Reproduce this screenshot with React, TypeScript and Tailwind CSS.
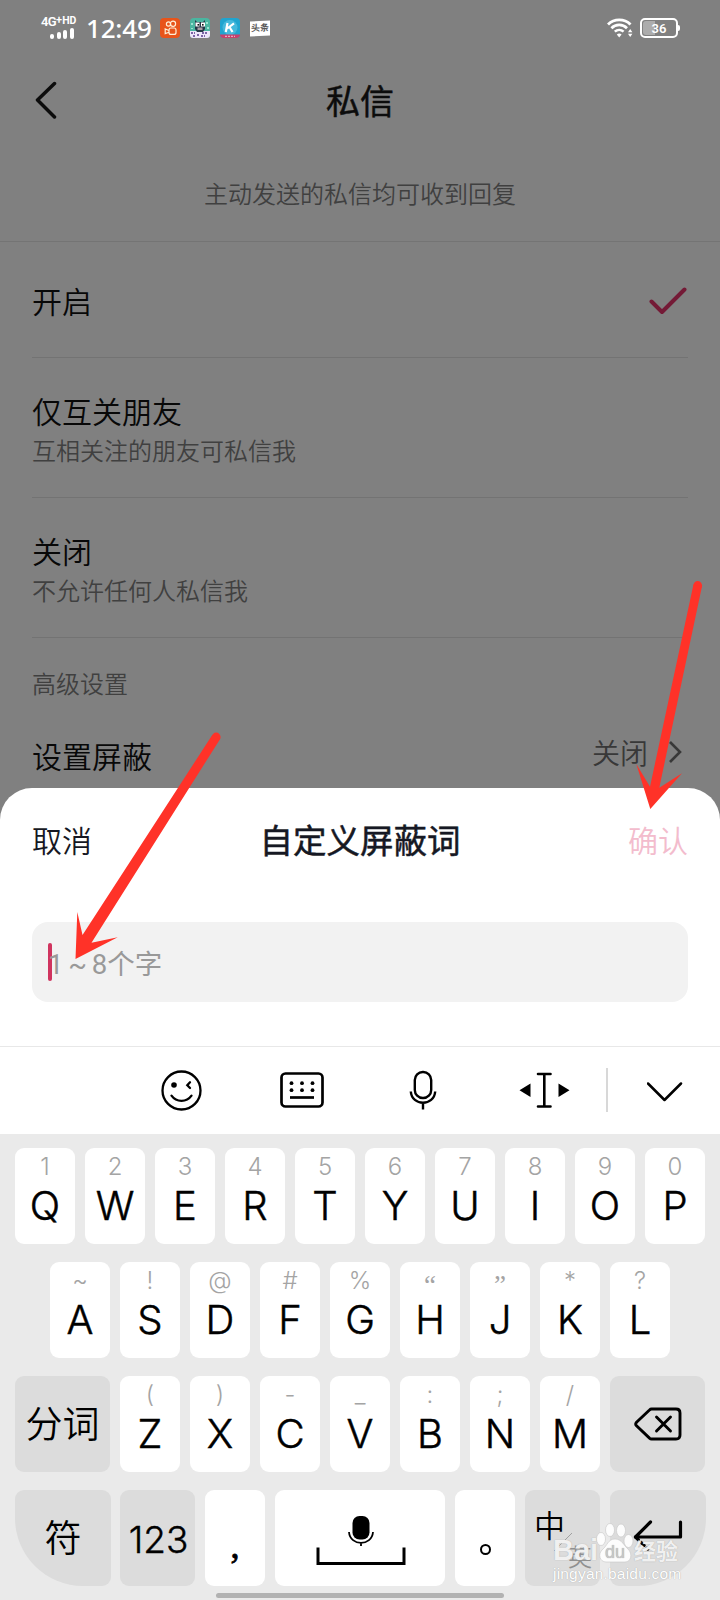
import React from 'react';
import clsx from 'clsx';

type KeyDef = { label: string; hint: string };

const toKeys = (letters: string, hints: string[]): KeyDef[] =>
  letters.split('').map((label, i) => ({ label, hint: hints[i] }));

const ROW_1 = toKeys('QWERTYUIOP', ['1', '2', '3', '4', '5', '6', '7', '8', '9', '0']);
const ROW_2 = toKeys('ASDFGHJKL', ['~', '!', '@', '#', '%', '“', '”', '*', '?']);
const ROW_3 = toKeys('ZXCVBNM', ['(', ')', '-', '_', ':', ';', '/']);

function StatusBar() {
  return (
    <div className="h-[56px] flex items-start pl-[41px] pr-[40px] pt-[17px] text-white">
      <div className="w-[38px] h-[22px] flex flex-col font-['Roboto'] font-semibold">
        <div className="flex h-[9px] whitespace-nowrap">
          <span className="text-[13px] leading-[10px] tracking-[-0.6px]">4G</span>
          <span className="text-[11px] leading-[5px]">+</span>
          <span className="text-[10.5px] leading-[8px] font-bold">HD</span>
        </div>
        <div className="flex items-end gap-[2.5px] h-[12px] pl-[9px] mt-px">
          <div className="w-[4px] h-[5px] rounded-[2px] bg-white" />
          <div className="w-[4px] h-[7px] rounded-[2px] bg-white" />
          <div className="w-[4px] h-[9px] rounded-[2px] bg-white" />
          <div className="w-[4px] h-[11px] rounded-[2px] bg-white" />
        </div>
      </div>
      <div className="w-[73px] pl-[7px] h-[22px] leading-[22px] text-[26px] font-medium font-['Noto_Sans'] tracking-[-0.2px]">12:49</div>
      <div className="flex gap-[10px] pt-px pl-[8px]">
        <svg width="20" height="20" viewBox="0 0 20 20">
          <rect width="20" height="20" rx="4" fill="#e8541a" />
          <g fill="none" stroke="#fff0d8" strokeWidth="1.2">
            <circle cx="8.500" cy="6" r="2.100" />
            <circle cx="13" cy="5.800" r="2.600" />
            <rect x="9" y="10" width="7" height="6.400" rx="2" />
            <path d="M9 12.500 5.200 11v4.600L9 14.200" />
          </g>
        </svg>
        <svg width="20" height="20" viewBox="0 0 20 20">
          <rect width="20" height="20" rx="4" fill="#4ab5a0" />
          <path d="M0 13h20v4a3 3 0 0 1-3 3H3a3 3 0 0 1-3-3z" fill="#ece6fa" />
          <path d="M1 15h4m2 2h3m2-2h5M3 18h3m5 0h4" stroke="#563a8c" strokeWidth="1.3" strokeDasharray="2 1" />
          <path d="M5 2l2 2h6l2-2v9l-2 3H7l-2-3z" fill="#253848" />
          <rect x="5.5" y="4.5" width="4" height="4" fill="#fff" />
          <rect x="11" y="4.5" width="4" height="4" fill="#fff" />
          <rect x="7.5" y="6" width="1.6" height="1.6" fill="#111" />
          <rect x="12" y="6" width="1.6" height="1.6" fill="#111" />
          <path d="M7.5 9.5h5v2.5h-5z" fill="#a99aa0" />
          <path d="M2 5v2m0 3v1m15-7v2m1 3v2" stroke="#bdf5e5" strokeWidth="1.4" />
        </svg>
        <svg width="20" height="20" viewBox="0 0 20 20">
          <rect width="20" height="20" rx="4" fill="#20a4cf" />
          <circle cx="10" cy="9.5" r="7.5" fill="#45b9dc" />
          <path d="M7.500 5 5.800 14M14 5.300 7.200 10.500M9.500 9l3 5" stroke="#fff" strokeWidth="2.200" fill="none" />
          <path d="M0 16.500h20c0 2-1.500 3.500-3.500 3.500h-13C1.500 20 0 18.500 0 16.500z" fill="#c8406c" />
          <path d="M5 18.300h10" stroke="#f2c6d4" strokeWidth="1" strokeDasharray="2 1" />
        </svg>
        <div className="w-[20px] h-[15px] mt-[3px] bg-white text-[#555] text-[9px] leading-[14px] font-bold text-center whitespace-nowrap -skew-y-3">头条</div>
      </div>
      <div className="ml-auto flex items-start gap-[7px] pt-px">
        <svg width="26" height="20" viewBox="0 0 26 20" fill="none" stroke="#fff">
          <path d="M1 6.500a16 16 0 0 1 22.500 0" strokeWidth="2.900" />
          <path d="M4.400 10.200a11 11 0 0 1 15.600 0" strokeWidth="2.700" />
          <path d="M7.800 13.700a6.500 6.500 0 0 1 8.800 0" strokeWidth="2.500" />
          <path d="M9.800 16.600 12.200 19.400 14.600 16.600a3.500 3.500 0 0 0-4.800 0z" fill="#fff" stroke="none" />
          <path d="M21 14.200 23.200 11l2.200 3.200zM21 15.800 23.200 19l2.200-3.200z" fill="#fff" stroke="none" />
        </svg>
        <div className="flex items-center">
          <div className="relative w-[38px] h-[20px] rounded-[5px] border-2 border-white p-[1px]">
            <div className="w-[12px] h-full rounded-l-[3px] bg-[#acacac]" />
            <div className="absolute inset-0 text-center text-[13px] leading-[17px] font-semibold font-['Roboto']">36</div>
          </div>
          <div className="w-[2px] h-[6px] rounded-r bg-white" />
        </div>
      </div>
    </div>
  );
}

function OptionRow({ title, desc, checked }: { title: string; desc?: string; checked?: boolean }) {
  return (
    <div className={clsx('mx-[32px] flex items-start justify-between border-b border-[#737373]', desc ? 'h-[140px] pt-[32px]' : 'h-[116px] pt-[38px]')}>
      <div>
        <div className="text-[30px] leading-[40px] text-[#080808]">{title}</div>
        {desc && <div className="mt-[2px] text-[24px] leading-[36px] text-[#404040]">{desc}</div>}
      </div>
      {checked && (
        <svg className="mt-[7px] mr-px" width="38" height="28" viewBox="0 0 38 28" fill="none" stroke="#741a36" strokeWidth="4" strokeLinecap="round" strokeLinejoin="round">
          <path d="M2.500 14.500 13 25 35.500 2.500" />
        </svg>
      )}
    </div>
  );
}

function LetterKey({ label, hint }: KeyDef) {
  const quote = hint === '“' || hint === '”';
  return (
    <div className="w-[60px] h-[96px] rounded-[9px] bg-white flex flex-col items-center">
      <span className={clsx('h-[38px] leading-[38px] text-[#a4a4a4]', quote ? "font-['Liberation_Serif'] text-[27px] pt-[4px]" : 'text-[24px] font-light')}>{hint}</span>
      <span className="h-[40px] leading-[40px] text-[40px] font-light [-webkit-text-stroke:0.5px] text-black">{label}</span>
    </div>
  );
}

function FnKey({ className, children }: { className?: string; children: React.ReactNode }) {
  return <div className={clsx('h-[96px] flex items-center justify-center', className)}>{children}</div>;
}

function Toolbar() {
  return (
    <div className="h-[88px] border-t border-[#e8e8e8] flex items-center pl-[161px] pr-[36px] pb-px text-black">
      <svg className="shrink-0" width="41" height="41" viewBox="0 0 41 41" fill="none" stroke="currentColor" strokeWidth="2.300" strokeLinecap="round">
        <circle cx="20.500" cy="20.500" r="19" />
        <circle cx="13" cy="15" r="2.800" fill="currentColor" stroke="none" />
        <path d="M29 12.300 26.300 15.200l2.700 2.800M10.500 25.700c5 7 15 7 20 0" />
      </svg>
      <svg className="shrink-0 ml-[78px]" width="44" height="36" viewBox="0 0 44 36" fill="none" stroke="currentColor" strokeWidth="2.700">
        <rect x="1.500" y="1.500" width="41" height="33" rx="4" />
        <path d="M10 25.500h24" />
        <g fill="currentColor" stroke="none">
          <circle cx="11.500" cy="11.200" r="1.900" />
          <circle cx="22" cy="11.200" r="1.900" />
          <circle cx="32.500" cy="11.200" r="1.900" />
          <circle cx="11.500" cy="18.200" r="1.900" />
          <circle cx="22" cy="18.200" r="1.900" />
          <circle cx="32.500" cy="18.200" r="1.900" />
        </g>
      </svg>
      <svg className="shrink-0 ml-[85px]" width="28" height="40" viewBox="0 0 28 40" fill="none" stroke="currentColor" strokeWidth="2.400">
        <rect x="5.800" y="2" width="16.400" height="26" rx="8" />
        <path d="M1.800 21.500c1 15 23.400 15 24.400 0M14 33v6.500" />
      </svg>
      <svg className="shrink-0 ml-[82px]" width="51" height="38" viewBox="0 0 51 38" fill="none" stroke="currentColor" strokeWidth="2.600" strokeLinecap="round">
        <path d="M19 3h12.500M19 35.500h12.500M25.300 3v32.500" />
        <path d="M11.500 12.500v13.500L.500 19.200zM39.500 12.500v13.500l11-6.800z" fill="currentColor" stroke="none" />
      </svg>
      <div className="shrink-0 ml-[36px] w-[2px] h-[44px] bg-[#d8d8d8]" />
      <svg className="shrink-0 ml-[39px] mt-[4px]" width="36" height="20" viewBox="0 0 36 20" fill="none" stroke="currentColor" strokeWidth="2.500" strokeLinecap="round" strokeLinejoin="round">
        <path d="M1 1.500 17.500 18 34 1.500" />
      </svg>
    </div>
  );
}

function Keyboard() {
  return (
    <div className="h-[466px] bg-[#eaeaea] pt-[14px] px-[15px] flex flex-col gap-[18px] font-['Inter','Noto_Sans_CJK_SC',sans-serif]">
      <div className="flex gap-[10px]">
        {ROW_1.map((k) => <LetterKey key={k.label} {...k} />)}
      </div>
      <div className="flex gap-[10px] pl-[35px]">
        {ROW_2.map((k) => <LetterKey key={k.label} {...k} />)}
      </div>
      <div className="flex gap-[10px]">
        <FnKey className="w-[95px] rounded-[9px] bg-[#dcdcdc] text-[37px] pt-[2px]">分词</FnKey>
        {ROW_3.map((k) => <LetterKey key={k.label} {...k} />)}
        <FnKey className="w-[95px] rounded-[9px] bg-[#dcdcdc] pl-px">
          <svg width="48" height="34" viewBox="0 0 48 34" fill="none" stroke="#000" strokeWidth="2.900" strokeLinecap="round" strokeLinejoin="round">
            <path d="M17.500 2H42q4 0 4 4v22q0 4-4 4H17.500q-1 0-2-.900L2.500 18.800q-1.600-1.800 0-3.600L15.500 3q1-1 2-1z" />
            <path d="M22.500 10 36.500 24M36.500 10 22.500 24" />
          </svg>
        </FnKey>
      </div>
      <div className="flex mr-[-1px]">
        <FnKey className="w-[96px] rounded-[9px] rounded-bl-[68px] bg-[#dcdcdc] text-[37px] pt-[2px]">符</FnKey>
        <FnKey className="ml-[9px] w-[75px] rounded-[9px] bg-[#dcdcdc] text-[37px] font-light [-webkit-text-stroke:0.4px] pl-[2px] pt-[4px]">123</FnKey>
        <FnKey className="ml-[10px] w-[60px] rounded-[9px] bg-white text-[36px] font-['Liberation_Serif'] [-webkit-text-stroke:0.8px] pt-[16px]">,</FnKey>
        <FnKey className="ml-[10px] w-[170px] rounded-[9px] bg-white">
          <svg className="mt-[3px] ml-[2px]" width="90" height="50" viewBox="0 0 90 50" fill="none" stroke="#000">
            <rect x="36.500" y="1" width="17" height="23.500" rx="7" fill="#000" stroke="none" />
            <path d="M33 17c1 14.500 23 14.500 24 0M45 27v4" strokeWidth="1.800" />
            <path d="M2 32.500V48.500h86V32.500" strokeWidth="3" />
          </svg>
        </FnKey>
        <FnKey className="ml-[10px] w-[60px] rounded-[9px] bg-white">
          <div className="mt-[22px] w-[11px] h-[11px] rounded-full border-2 border-black" />
        </FnKey>
        <div className="relative ml-[10px] w-[75px] h-[96px] rounded-[9px] bg-[#dcdcdc]">
          <span className="absolute left-[9px] top-[20px] text-[31px] leading-[31px]">中</span>
          <svg className="absolute left-[28px] top-[42px]" width="20" height="20" viewBox="0 0 20 20" stroke="#a0a0a0"><path d="M1 19 19 1" /></svg>
          <span className="absolute left-[43px] top-[56px] text-[24px] leading-[24px] text-[#909090]">英</span>
        </div>
        <FnKey className="ml-[10px] w-[96px] rounded-[9px] rounded-br-[68px] bg-[#dcdcdc]">
          <svg className="mt-[-4px]" width="50" height="32" viewBox="0 0 50 32" fill="none" stroke="#000" strokeWidth="3.200" strokeLinecap="round" strokeLinejoin="round">
            <path d="M47.500 2v15H2.500M17.500 2 2.500 17" />
            <path d="M2.500 17 15 29" strokeDasharray="4 4" />
          </svg>
        </FnKey>
      </div>
    </div>
  );
}

function Watermark() {
  return (
    <div className="absolute left-[553px] top-[1520px] w-[130px] text-white/85 font-['Noto_Sans_CJK_SC',sans-serif] [text-shadow:0_0_1px_#999]">
      <div className="flex items-end h-[43px]">
        <span className="w-[43px] text-[29px] leading-[26px] font-bold font-['Liberation_Sans']">Bai</span>
        <svg width="38" height="42" viewBox="0 0 38 42" fill="rgba(255,255,255,.9)" stroke="#c6c6c6" strokeWidth=".6">
          <ellipse cx="5" cy="18" rx="4.500" ry="6.500" />
          <ellipse cx="14" cy="9" rx="4.500" ry="6.500" />
          <ellipse cx="25" cy="9.500" rx="4.500" ry="6.500" />
          <ellipse cx="32.500" cy="20" rx="4.500" ry="6.500" />
          <path d="M19 18c-7 0-8 7-12 10-6 5-3 13 3 13h19c6 0 8-8 3-13-4-3-6-10-13-10z" />
          <text x="9" y="37" fontSize="18" fontFamily="Liberation Sans" fill="#c8c8c8" stroke="none">du</text>
        </svg>
        <span className="text-[22px] leading-[27px] font-bold">经验</span>
      </div>
      <div className="mt-[1px] text-[15.500px] leading-[20px] tracking-[0.200px] font-['Liberation_Sans'] text-white">jingyan.baidu.com</div>
    </div>
  );
}

export default function App() {
  return (
    <div className="relative w-[720px] h-[1600px] overflow-hidden bg-[#808080] flex flex-col font-[350] font-['Noto_Sans_CJK_SC',sans-serif]">
      <StatusBar />

      {/* Page behind the sheet */}
      <div className="h-[732px] shrink-0">
        <div className="h-[90px] grid grid-cols-[1fr_auto_1fr] items-center">
          <svg className="ml-[34px] mt-[-2px]" width="24" height="38" viewBox="0 0 24 38" fill="none" stroke="#0c0c0c" strokeWidth="3.500" strokeLinecap="round" strokeLinejoin="round">
            <path d="M20.500 2.500 3.500 19l17 17" />
          </svg>
          <h1 className="text-[34px] leading-[44px] font-normal [-webkit-text-stroke:0.5px] text-[#0c0c0c] mt-[-2px]">私信</h1>
        </div>
        <div className="h-[96px] border-b border-[#747474] pt-[29px] text-center text-[24px] leading-[36px] text-[#404040]">主动发送的私信均可收到回复</div>
        <OptionRow title="开启" checked />
        <OptionRow title="仅互关朋友" desc="互相关注的朋友可私信我" />
        <OptionRow title="关闭" desc="不允许任何人私信我" />
        <div className="pl-[32px] pt-[27px] text-[24px] leading-[36px] text-[#404040]">高级设置</div>
        <div className="pl-[32px] pr-[38px] pt-[33px] flex justify-between">
          <span className="text-[30px] leading-[42px] text-[#080808]">设置屏蔽</span>
          <div className="flex items-center h-[35px] text-[28px] text-[#383838]">
            关闭
            <svg className="ml-[20px]" width="14" height="22" viewBox="0 0 14 22" fill="none" stroke="currentColor" strokeWidth="2.600">
              <path d="M2 1l10 10L2 21" />
            </svg>
          </div>
        </div>
      </div>

      {/* Bottom sheet */}
      <div className="h-[812px] shrink-0 rounded-t-[32px] bg-white overflow-hidden">
        <div className="h-[134px] px-[32px] pt-[28px] grid grid-cols-[1fr_auto_1fr] items-start">
          <span className="text-[30px] leading-[46px] text-[#161823]">取消</span>
          <span className="text-[33.500px] leading-[46px] font-normal [-webkit-text-stroke:0.5px] text-[#161823]">自定义屏蔽词</span>
          <span className="text-right text-[30px] leading-[46px] text-[#f3bccd]">确认</span>
        </div>
        <div className="mx-[32px] h-[80px] rounded-[16px] bg-[#f2f2f2] flex items-center pl-[16px]">
          <div className="w-[4px] h-[38px] rounded-[2px] bg-[#d0345f]" />
          <span className="ml-[-4px] mt-[6px] text-[27.500px] leading-[40px] text-[#999] font-normal [word-spacing:-2px] font-['Roboto','Noto_Sans_CJK_SC']">1 ~ 8个字</span>
        </div>
        <div className="h-[44px]" />
        <Toolbar />
        <Keyboard />
      </div>

      <Watermark />
      <div className="absolute left-[216px] top-[1593px] w-[288px] h-[5px] rounded-full bg-[#b2b2b2]" />

      {/* Pointer arrows */}
      <svg className="absolute inset-0" width="720" height="1600" viewBox="0 0 720 1600" fill="#ff3228">
        <circle cx="216.200" cy="737" r="4.400" />
        <path d="M212.400 734.800 82.500 935 77.300 912 75.500 959 117.700 937.300 91.500 942.700 220 739.200z" />
        <circle cx="697.700" cy="585.500" r="4.400" />
        <path d="M693.400 584.800 650 786.700 636.300 764 650.300 809 682 773.300 659.300 787.700 702 586.300z" />
      </svg>
    </div>
  );
}
